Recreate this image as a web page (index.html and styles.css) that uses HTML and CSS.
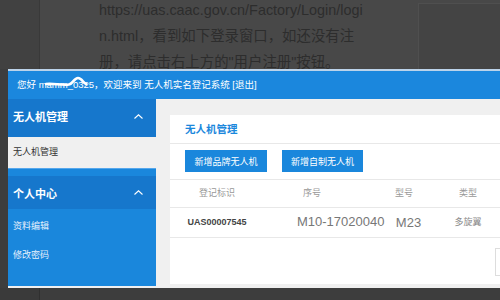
FILE: index.html
```html
<!DOCTYPE html>
<html lang="zh-CN">
<head>
  <meta charset="UTF-8">
  <meta name="viewport" content="width=device-width, initial-scale=1.0">
  <title>无人机实名登记系统</title>
  <link rel="stylesheet" href="styles.css">
</head>
<body>

<!-- Document page behind the pasted screenshot -->
<div class="backdrop">
  <div class="gutter"></div>
  <div class="sheet">
    <p class="doc-text">
      <span>https://uas.caac.gov.cn/Factory/Login/logi</span>
      <span>n.html，看到如下登录窗口，如还没有注</span>
      <span>册，请点击右上方的"用户注册"按钮。</span>
    </p>
  </div>
  <div class="sidebox"></div>
</div>

<!-- Pasted screenshot of the registration system -->
<div class="shot">
  <div class="topbar">
    您好 <span class="user">mamm_0325<svg class="scribble" width="42" height="14" viewBox="0 0 42 14"><path d="M1 9 C8 8 16 10.5 24 9.5 C28 9 29 3 33 3 C37 3 38 8 41 9" fill="none" stroke="#fff" stroke-width="2.6" stroke-linecap="round"/></svg></span>，欢迎来到 无人机实名登记系统 [退出]
  </div>

  <div class="shot-body">
    <aside class="sidebar">
      <div class="menu-head first">
        <span>无人机管理</span>
        <svg width="9" height="5" viewBox="0 0 9 5"><polyline points="0.5,4.5 4.5,0.8 8.5,4.5" fill="none" stroke="#fff" stroke-width="1.1"/></svg>
      </div>
      <div class="menu-item active">无人机管理</div>
      <div class="menu-gap"></div>
      <div class="menu-head">
        <span>个人中心</span>
        <svg width="9" height="5" viewBox="0 0 9 5"><polyline points="0.5,4.5 4.5,0.8 8.5,4.5" fill="none" stroke="#fff" stroke-width="1.1"/></svg>
      </div>
      <ul class="menu-list">
        <li>资料编辑</li>
        <li>修改密码</li>
      </ul>
    </aside>

    <main class="content">
      <section class="card">
        <h2 class="card-title">无人机管理</h2>
        <div class="toolbar">
          <button type="button">新增品牌无人机</button>
          <button type="button">新增自制无人机</button>
        </div>
        <div class="row head">
          <div>登记标识</div>
          <div>序号</div>
          <div>型号</div>
          <div>类型</div>
        </div>
        <div class="row data">
          <div class="reg-id">UAS00007545</div>
          <div class="serial">M10-17020040</div>
          <div class="model">M23</div>
          <div>多旋翼</div>
        </div>
        <div class="pager"><span class="page-box"></span></div>
      </section>
    </main>
  </div>
</div>

<div class="floor">
  <div class="gutter"></div>
  <div class="floor-page"></div>
</div>

</body>
</html>
```

FILE: styles.css
```css
html, body {
  margin: 0;
  height: 300px;
  overflow: hidden;
  background: #3d3d3d;
  font-family: "Liberation Sans", "Noto Sans CJK SC", sans-serif;
}

/* document behind */
.backdrop {
  display: grid;
  grid-template-columns: 40px 378px 82px;
  height: 69px;
  overflow: hidden;
  background: #484848;
}
.gutter {
  background: #414141;
  border-right: 1px solid #393939;
}
.sheet {
  padding-left: 59px;
}
.doc-text {
  margin: -3px 0 0;
  font-size: 14.4px;
  line-height: 26px;
  color: #2d2d2d;
  white-space: nowrap;
}
.doc-text span {
  display: block;
}
.sidebox {
  margin-top: 3px;
  background: #444;
  border-top: 1px solid #4f4f4f;
  border-left: 1px solid #4f4f4f;
}

/* screenshot */
.shot {
  margin-left: 8px;
  width: 600px;
  border-top: 2px solid #bcd3ea;
}
.topbar {
  height: 28px;
  line-height: 28px;
  padding-left: 9px;
  background: #1b87dd;
  color: #fff;
  font-size: 9.5px;
  white-space: nowrap;
}
.user {
  position: relative;
}
.scribble {
  position: absolute;
  left: 6px;
  top: -4px;
}
.shot-body {
  display: grid;
  grid-template-columns: 148px 1fr;
  height: 189px;
  background: #f0f0f0;
}

/* sidebar */
.sidebar {
  height: 187px;
  background: #1a87dc;
}
.menu-head {
  display: flex;
  align-items: center;
  justify-content: space-between;
  height: 33px;
  padding: 0 13px 0 5px;
  background: #1677cc;
  color: #fff;
  font-size: 11px;
  font-weight: bold;
}
.menu-head.first {
  height: 38px;
  padding-bottom: 4px;
  box-sizing: border-box;
}
.menu-item {
  height: 31px;
  line-height: 31px;
  padding-left: 5px;
  font-size: 9px;
}
.menu-item.active {
  background: #f0f0f0;
  color: #333;
}
.menu-gap {
  height: 7px;
  border-top: 1px solid #55a7ec;
}
.menu-list {
  list-style: none;
  margin: 0;
  padding: 3px 0 0;
}
.menu-list li {
  height: 29px;
  line-height: 29px;
  padding-left: 5px;
  font-size: 9px;
  color: #e6f1fc;
}

/* content */
.content {
  padding: 16px 0 0 14px;
}
.card {
  height: 169px;
  background: #fff;
}
.card-title {
  margin: 0;
  height: 28px;
  line-height: 28px;
  padding-left: 15px;
  font-size: 10.5px;
  font-weight: bold;
  color: #1a87dc;
  border-bottom: 1px solid #e8e8e8;
}
.toolbar {
  display: flex;
  gap: 15px;
  padding: 6px 15px 7px;
  border-bottom: 1px solid #e8e8e8;
}
.toolbar button {
  width: 82px;
  height: 22px;
  padding: 0;
  border: none;
  background: #1a87dc;
  color: #fff;
  font-family: inherit;
  font-size: 9px;
}
.toolbar button + button {
  width: 81px;
}
.row {
  display: grid;
  grid-template-columns: 94px 96px 88px 40px;
  text-align: center;
  border-bottom: 1px solid #e8e8e8;
  white-space: nowrap;
}
.row.head {
  height: 27px;
  line-height: 27px;
  font-size: 9px;
  color: #999;
}
.row.data {
  height: 29px;
  line-height: 29px;
  font-size: 9px;
  color: #888;
}
.reg-id {
  font-weight: bold;
  color: #444;
}
.serial, .model {
  font-size: 13px;
  color: #777;
}
.serial {
  text-align: left;
  padding-left: 33px;
  line-height: 27px;
}
.model {
  padding-left: 9px;
}
.pager {
  padding: 10px 0 0 325px;
}
.page-box {
  display: block;
  width: 30px;
  height: 26px;
  border: 1px solid #ddd;
}

/* below the screenshot */
.floor {
  display: grid;
  grid-template-columns: 40px 1fr;
  height: 12px;
}
.floor .gutter {
  background: #3a3a3a;
  border-right: 1px solid #303030;
}
.floor-page {
  background: #3d3d3d;
}
```
